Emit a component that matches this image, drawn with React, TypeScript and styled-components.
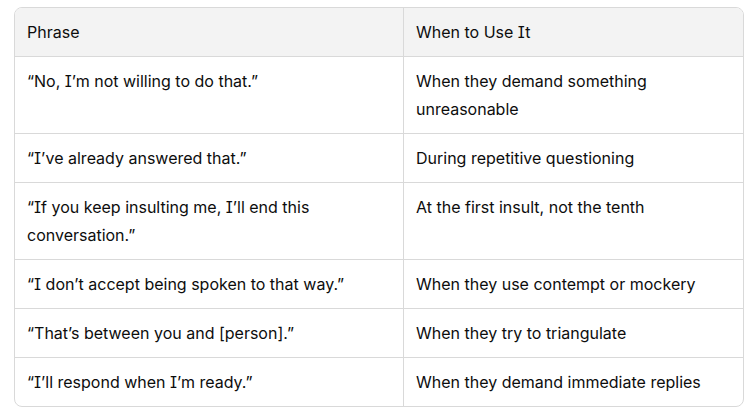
import React from "react"
import styled, { createGlobalStyle } from "styled-components"

type Row = {
  phrase: string
  when: string
}

const rows: Row[] = [
  { phrase: "“No, I’m not willing to do that.”", when: "When they demand something unreasonable" },
  { phrase: "“I’ve already answered that.”", when: "During repetitive questioning" },
  {
    phrase: "“If you keep insulting me, I’ll end this conversation.”",
    when: "At the first insult, not the tenth",
  },
  { phrase: "“I don’t accept being spoken to that way.”", when: "When they use contempt or mockery" },
  { phrase: "“That’s between you and [person].”", when: "When they try to triangulate" },
  { phrase: "“I’ll respond when I’m ready.”", when: "When they demand immediate replies" },
]

export default function App() {
  return (
    <>
      <GlobalStyle />
      <Page>
        <TableFrame>
          <Table>
            <colgroup>
              <col style={{ width: 389 }} />
              <col />
            </colgroup>
            <thead>
              <tr>
                <HeadCell>Phrase</HeadCell>
                <HeadCell>When to Use It</HeadCell>
              </tr>
            </thead>
            <tbody>
              {rows.map((row) => (
                <BodyRow key={row.phrase}>
                  <Cell>{row.phrase}</Cell>
                  <Cell>{row.when}</Cell>
                </BodyRow>
              ))}
            </tbody>
          </Table>
        </TableFrame>
      </Page>
    </>
  )
}

/**
 * Styled components
 */

const GlobalStyle = createGlobalStyle`
  html, body {
    margin: 0;
    padding: 0;
    background: #ffffff;
  }
  body {
    font-family: Inter, "Noto Sans", "Liberation Sans", sans-serif;
    font-feature-settings: "cv08" 1;
    color: #0d0d0d;
  }
`

const Page = styled("div")`
  padding: 7px 10px 0 14px;
`

const TableFrame = styled("div")`
  width: 730px;
  box-sizing: border-box;
  border: 1px solid #d9d9d9;
  border-radius: 8px;
  overflow: hidden;
`

const Table = styled("table")`
  width: 100%;
  table-layout: fixed;
  border-collapse: separate;
  border-spacing: 0;
  font-size: 16px;
  line-height: 28px;
`

const HeadCell = styled("th")`
  text-align: left;
  font-weight: 400;
  background: #f3f3f3;
  padding: 10px 12px;
  border-bottom: 1px solid #d9d9d9;
  vertical-align: top;

  &:first-child {
    border-right: 1px solid #d9d9d9;
  }
`

const Cell = styled("td")`
  padding: 10px 12px;
  border-bottom: 1px solid #d9d9d9;
  vertical-align: top;

  &:first-child {
    border-right: 1px solid #d9d9d9;
  }
`

const BodyRow = styled("tr")`
  &:last-child ${Cell} {
    border-bottom: none;
  }
`
